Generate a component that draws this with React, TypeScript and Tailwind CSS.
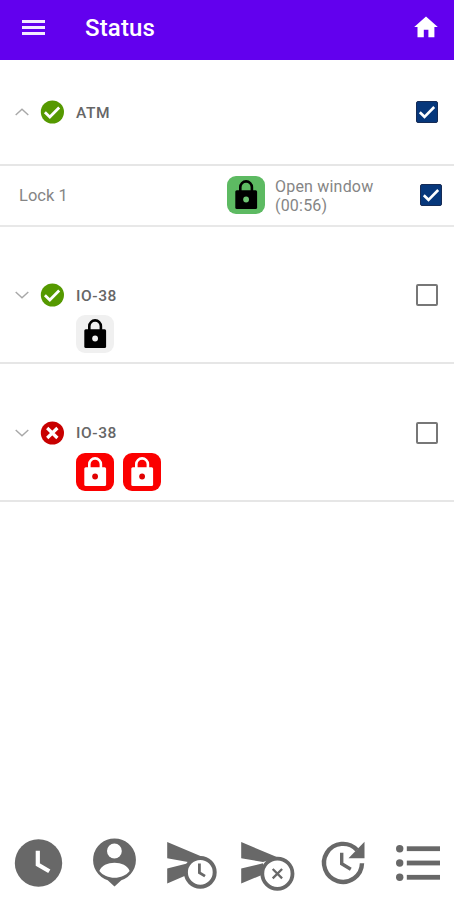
import type { ReactNode } from 'react';

type LockState = 'open' | 'closed' | 'alarm';

const lockStyles: Record<LockState, { tile: string; body: string; hole: string }> = {
  open: { tile: 'bg-[#5dba62]', body: '#000000', hole: '#6fc573' },
  closed: { tile: 'bg-[#f0f0f0]', body: '#000000', hole: '#f0f0f0' },
  alarm: { tile: 'bg-[#fb0000]', body: '#ffffff', hole: '#e00000' },
};

function LockTile({ state }: { state: LockState }) {
  const s = lockStyles[state];
  return (
    <div className={`w-[38px] h-[38px] rounded-[9px] shrink-0 ${s.tile}`}>
      <svg viewBox="0 0 38 38" className="block w-full h-full">
        <path d="M13.3 16V11.2a5.8 5.8 0 0 1 11.6 0V16" fill="none" stroke={s.body} strokeWidth="2.6" />
        <rect x="8.3" y="14.3" width="21.8" height="18.7" rx="1.5" fill={s.body} />
        <circle cx="19.1" cy="23.5" r="2.9" fill={s.hole} />
      </svg>
    </div>
  );
}

function Checkbox({ checked }: { checked?: boolean }) {
  if (!checked) {
    return <div className="w-[22px] h-[22px] rounded-[2px] border-2 border-[#777777] shrink-0" />;
  }
  return (
    <div className="w-[22px] h-[22px] rounded-[2px] bg-[#06377b] border border-[#162b55] shrink-0">
      <svg viewBox="0 0 20 20" className="block w-full h-full">
        <path d="M2.8 10.2 7.5 14.8 17.2 5" fill="none" stroke="#ffffff" strokeWidth="2.6" />
      </svg>
    </div>
  );
}

function StatusDot({ ok }: { ok: boolean }) {
  return (
    <svg viewBox="0 0 24 24" className="w-6 h-6 shrink-0">
      <circle cx="12.4" cy="12" r="11.6" fill={ok ? '#559900' : '#c80000'} />
      {ok ? (
        <path d="M4.9 12.3 9.8 17 19.2 7.6" fill="none" stroke="#ffffff" strokeWidth="2.8" />
      ) : (
        <path d="M7.2 7 17.4 17M17.4 7 7.2 17" fill="none" stroke="#ffffff" strokeWidth="3.2" />
      )}
    </svg>
  );
}

function Chevron({ up }: { up?: boolean }) {
  return (
    <svg viewBox="0 0 14 8" className="w-[14px] h-2 shrink-0">
      <path d={up ? 'M.7 7 7 1.2 13.3 7' : 'M.7 1 7 6.8 13.3 1'} fill="none" stroke="#a8a8a8" strokeWidth="1.4" />
    </svg>
  );
}

interface GroupProps {
  name: string;
  ok: boolean;
  expanded?: boolean;
  checked?: boolean;
  className: string;
  locks?: LockState[];
}

function Group({ name, ok, expanded, checked, className, locks = [] }: GroupProps) {
  return (
    <section className={`border-b-2 border-[#e6e6e6] pl-[15px] pr-4 ${className}`}>
      <div className="flex items-center h-6">
        <Chevron up={expanded} />
        <div className="ml-[11px] mr-3">
          <StatusDot ok={ok} />
        </div>
        <span className="flex-1 pt-[3px] text-[15.5px] leading-none font-medium tracking-[0.6px] text-[#666666]">{name}</span>
        <Checkbox checked={checked} />
      </div>
      {locks.length > 0 && (
        <div className="flex gap-[9px] ml-[61px] mt-2">
          {locks.map((l, i) => <LockTile key={i} state={l} />)}
        </div>
      )}
    </section>
  );
}

function ToolIcon({ children }: { children: ReactNode }) {
  return (
    <button className="w-[75px] h-20 shrink-0">
      <svg viewBox="0 0 75 80" className="block w-full h-full" fill="none" stroke="none">
        {children}
      </svg>
    </button>
  );
}

const gray = '#686868';

export default function App() {
  return (
    <div className="flex flex-col w-[454px] h-[900px] overflow-hidden bg-white font-['Roboto','Liberation_Sans',sans-serif]">
      <header className="flex items-center h-[60px] pl-[22px] pr-4 pb-[6px] bg-[#6200ee] shrink-0">
        <div className="flex flex-col gap-[3px] w-[23px]">
          <span className="h-[3px] bg-[#f3ebfe]" />
          <span className="h-[3px] bg-[#f3ebfe]" />
          <span className="h-[3px] bg-[#f3ebfe]" />
        </div>
        <h1 className="flex-1 ml-10 pt-[1px] text-[24px] leading-none font-medium tracking-[0.15px] text-white">Status</h1>
        <svg viewBox="0 0 24 22" className="w-6 h-[22px]">
          <path d="M12 .5 23.8 11h-3.4v10.3h-6V13.7H9.8v7.6H3.5V11H.2z" fill="#ffffff" />
        </svg>
      </header>

      <main className="flex-1">
        <Group name="ATM" ok expanded checked className="h-[106px] pt-10" />
        <div className="flex items-center h-[61px] pl-[19px] pr-3 pb-[1px] border-b-2 border-[#e8e8e8] text-[#858585]">
          <span className="w-[208px] pt-[3px] text-[16.5px] leading-none">Lock 1</span>
          <LockTile state="open" />
          <p className="flex-1 ml-[10px] pt-[1px] text-base leading-[19px] tracking-[0.2px]">
            Open window
            <br />
            (00:56)
          </p>
          <Checkbox checked />
        </div>
        <Group name="IO-38" ok className="h-[137px] pt-14" locks={['closed']} />
        <Group name="IO-38" ok={false} className="h-[138px] pt-[56.5px]" locks={['alarm', 'alarm']} />
      </main>

      <nav className="flex h-20 pl-1 shrink-0">
        <ToolIcon>
          <circle cx="34.5" cy="43" r="23.7" fill={gray} />
          <path d="M33.8 30.7V44.5L45.3 51.3" stroke="#ffffff" strokeWidth="4.2" />
        </ToolIcon>
        <ToolIcon>
          <path d="M35.5 18.5a21.4 21.4 0 0 1 6.8 41.7L35.5 66.5 28.7 60.2A21.4 21.4 0 0 1 35.5 18.5z" fill={gray} />
          <circle cx="35.4" cy="31" r="7.4" fill="#ffffff" />
          <path d="M20.4 51C24 40 47 40 50.6 51 44 60 27 60 20.4 51z" fill="#ffffff" />
        </ToolIcon>
        <ToolIcon>
          <path d="M13.2 22 50 37.5 34 42 13.2 38.3zM13.2 48.5 34 43.3V54.5L13.2 63.4z" fill={gray} />
          <circle cx="46.3" cy="52.3" r="14.4" fill="#ffffff" stroke={gray} strokeWidth="4" />
          <path d="M45.4 43.5V52.6L51 56.1" stroke={gray} strokeWidth="2.8" />
        </ToolIcon>
        <ToolIcon>
          <path d="M12.2 22 49 37.5 34 42 12.2 38.3zM12.2 48.5 34 43.3V54.5L12.2 63.4z" fill={gray} />
          <circle cx="48.4" cy="53.7" r="15.1" fill="#ffffff" stroke={gray} strokeWidth="3.8" />
          <path d="M43.7 49 53.1 58.4M53.1 49 43.7 58.4" stroke={gray} strokeWidth="2.3" />
        </ToolIcon>
        <ToolIcon>
          <path d="M58 43.3A19 19 0 1 1 53 30" stroke={gray} strokeWidth="4.4" />
          <path d="M60.5 21.8V38.2H44.5z" fill={gray} />
          <path d="M37.7 32.7V43.8L46.8 49.3" stroke={gray} strokeWidth="3.4" />
        </ToolIcon>
        <ToolIcon>
          {[28.7, 43, 57.3].map(y => (
            <g key={y} fill={gray}>
              <circle cx="20.7" cy={y} r="3.7" />
              <rect x="27.8" y={y - 2.4} width="33.2" height="4.8" />
            </g>
          ))}
        </ToolIcon>
      </nav>
    </div>
  );
}
